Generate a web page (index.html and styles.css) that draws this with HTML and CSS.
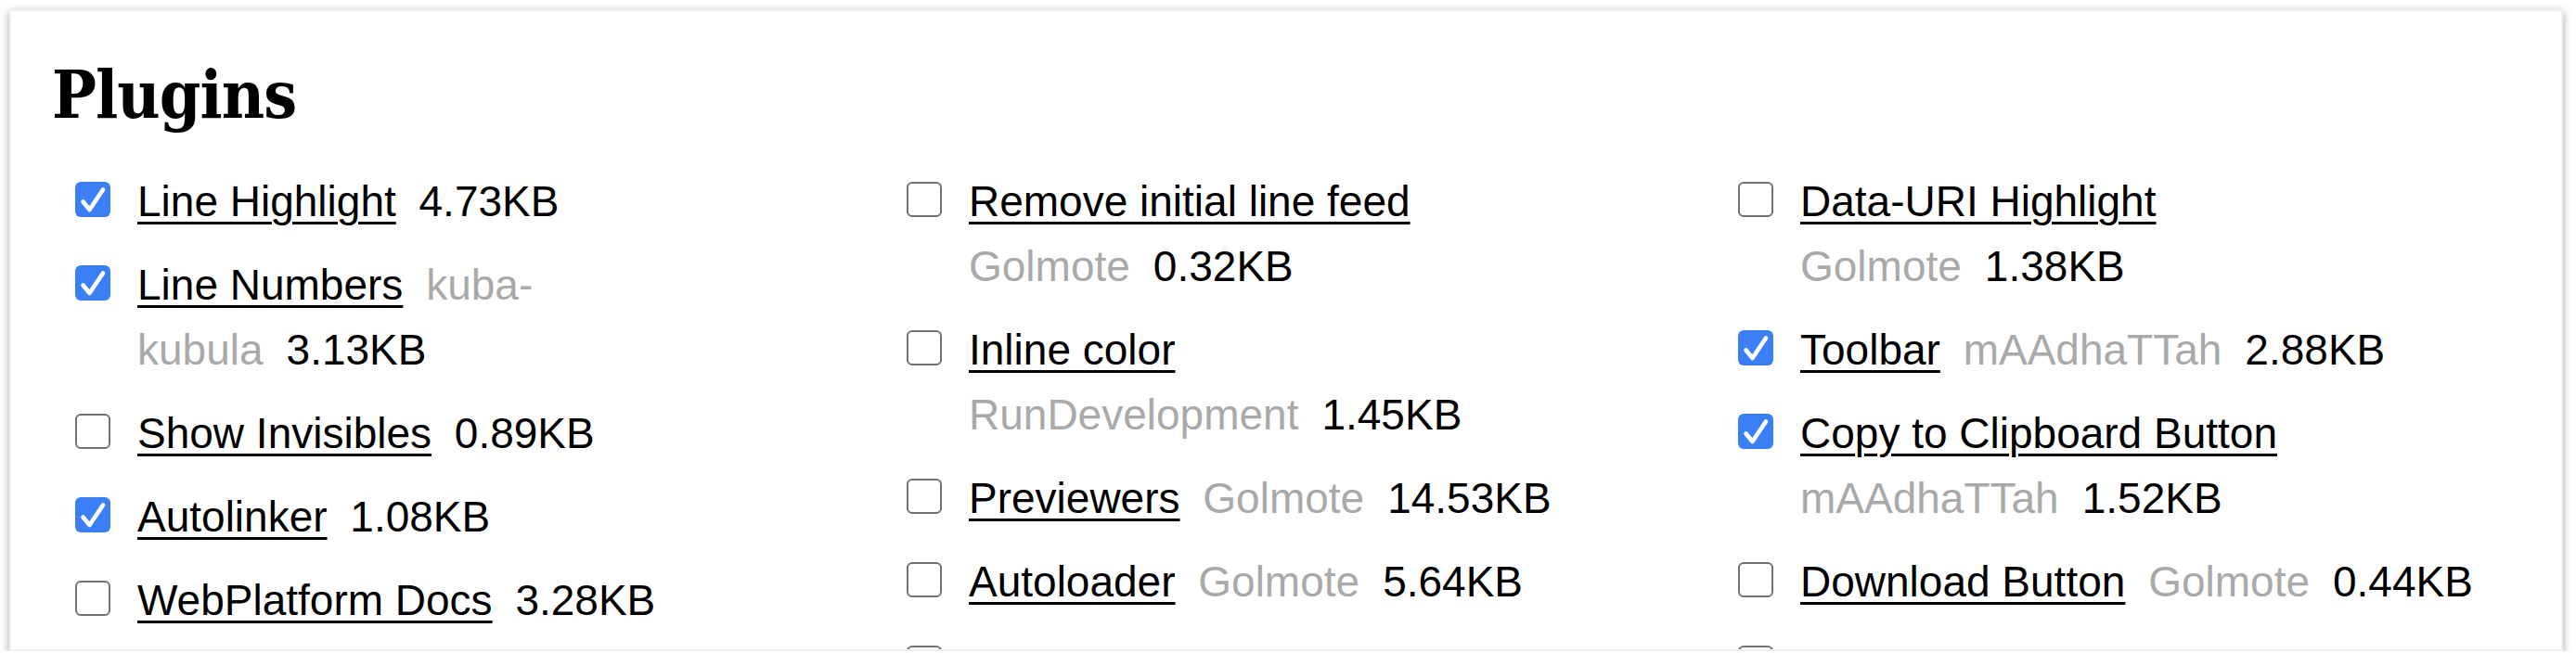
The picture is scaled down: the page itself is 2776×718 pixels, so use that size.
FILE: index.html
```html
<!DOCTYPE html>
<html lang="en">
<head>
<meta charset="utf-8">
<title>Plugins</title>
<link rel="stylesheet" href="styles.css">
</head>
<body>
<div class="window">
  <h2 class="title">Plugins</h2>
  <div class="cols">
    <ul class="col">
      <li class="item"><span class="box on"><svg viewBox="0 0 38 38"><path d="M8.5 21.5 L15.5 30 L30 8.5"/></svg></span><span class="txt"><a href="#">Line Highlight</a> <span class="size">4.73KB</span></span></li>
      <li class="item"><span class="box on"><svg viewBox="0 0 38 38"><path d="M8.5 21.5 L15.5 30 L30 8.5"/></svg></span><span class="txt"><a href="#">Line Numbers</a> <span class="owner">kuba-kubula</span><span class="size">3.13KB</span></span></li>
      <li class="item"><span class="box"></span><span class="txt"><a href="#">Show Invisibles</a> <span class="size">0.89KB</span></span></li>
      <li class="item"><span class="box on"><svg viewBox="0 0 38 38"><path d="M8.5 21.5 L15.5 30 L30 8.5"/></svg></span><span class="txt"><a href="#">Autolinker</a> <span class="size">1.08KB</span></span></li>
      <li class="item"><span class="box"></span><span class="txt"><a href="#">WebPlatform Docs</a> <span class="size">3.28KB</span></span></li>
    </ul>
    <ul class="col">
      <li class="item"><span class="box"></span><span class="txt"><a href="#">Remove initial line feed</a> <span class="owner">Golmote</span><span class="size">0.32KB</span></span></li>
      <li class="item"><span class="box"></span><span class="txt"><a href="#">Inline color</a> <span class="owner">RunDevelopment</span><span class="size">1.45KB</span></span></li>
      <li class="item"><span class="box"></span><span class="txt"><a href="#">Previewers</a> <span class="owner">Golmote</span><span class="size">14.53KB</span></span></li>
      <li class="item"><span class="box"></span><span class="txt"><a href="#">Autoloader</a> <span class="owner">Golmote</span><span class="size">5.64KB</span></span></li>
      <li class="item"><span class="box"></span></li>
    </ul>
    <ul class="col">
      <li class="item"><span class="box"></span><span class="txt"><a href="#">Data-URI Highlight</a> <span class="owner">Golmote</span><span class="size">1.38KB</span></span></li>
      <li class="item"><span class="box on"><svg viewBox="0 0 38 38"><path d="M8.5 21.5 L15.5 30 L30 8.5"/></svg></span><span class="txt"><a href="#">Toolbar</a> <span class="owner">mAAdhaTTah</span><span class="size">2.88KB</span></span></li>
      <li class="item"><span class="box on"><svg viewBox="0 0 38 38"><path d="M8.5 21.5 L15.5 30 L30 8.5"/></svg></span><span class="txt"><a href="#">Copy to Clipboard Button</a> <span class="owner">mAAdhaTTah</span><span class="size">1.52KB</span></span></li>
      <li class="item"><span class="box"></span><span class="txt"><a href="#">Download Button</a> <span class="owner">Golmote</span><span class="size">0.44KB</span></span></li>
      <li class="item"><span class="box"></span></li>
    </ul>
  </div>
</div>
</body>
</html>
```
FILE: styles.css
```css
html, body {
  margin: 0;
  padding: 0;
  background: #ffffff;
}

body {
  padding: 10px 0 0 10px;
  font-family: "Liberation Sans", Arial, sans-serif;
  color: #000;
}

.window {
  box-sizing: border-box;
  width: 2752px;
  height: 692px;
  background: #fff;
  border: 2px solid #edf2f0;
  box-shadow: 0 3px 9px rgba(0, 0, 0, 0.38);
  overflow: hidden;
  padding: 55px 0 0 44px;
}

.title {
  margin: 0;
  font-family: "DejaVu Serif", "Liberation Serif", serif;
  font-stretch: condensed;
  font-weight: bold;
  font-size: 71px;
  line-height: 71px;
  letter-spacing: -1px;
}

.cols {
  display: grid;
  grid-template-columns: repeat(3, 798px);
  column-gap: 98px;
  margin: 44px 0 0 25px;
  align-items: start;
}

.col {
  list-style: none;
  margin: 0;
  padding: 0;
}

.item {
  display: flex;
  align-items: flex-start;
  column-gap: 29px;
  margin-bottom: 20px;
  font-size: 46px;
  line-height: 70px;
}

.box {
  flex: 0 0 auto;
  box-sizing: border-box;
  width: 38px;
  height: 38px;
  margin-top: 14px;
  border: 2.5px solid #727272;
  border-radius: 6px;
  background: #fff;
}

.box.on {
  border: none;
  background: #3b7ff6;
}

.box svg {
  display: block;
  width: 38px;
  height: 38px;
}

.box svg path {
  fill: none;
  stroke: #fff;
  stroke-width: 4.6;
  stroke-linecap: round;
  stroke-linejoin: round;
}

.txt {
  width: 731px;
}

.txt a {
  color: #000;
  margin-right: 12px;
  text-decoration: underline;
  text-decoration-thickness: 3px;
  text-underline-offset: 6px;
}

.owner {
  color: #a9a9a9;
  margin-right: 25px;
}
```
